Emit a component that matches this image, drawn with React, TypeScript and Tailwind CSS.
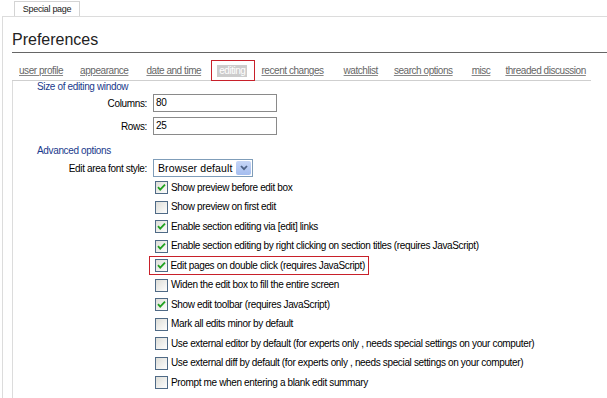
import React from 'react';

const tabs = [
  { label: 'user profile', ml: 'ml-[7px]' },
  { label: 'appearance', ml: 'ml-[17px]' },
  { label: 'date and time', ml: 'ml-[18px]' },
  { label: 'editing', ml: 'ml-[16px]', active: true },
  { label: 'recent changes', ml: 'ml-[14px]' },
  { label: 'watchlist', ml: 'ml-[20px]' },
  { label: 'search options', ml: 'ml-[16px]' },
  { label: 'misc', ml: 'ml-[19px]' },
  { label: 'threaded discussion', ml: 'ml-[15px]' },
];

const options: { label: string; checked: boolean; marked?: boolean }[] = [
  { label: 'Show preview before edit box', checked: true },
  { label: 'Show preview on first edit', checked: false },
  { label: 'Enable section editing via [edit] links', checked: true },
  { label: 'Enable section editing by right clicking on section titles (requires JavaScript)', checked: true },
  { label: 'Edit pages on double click (requires JavaScript)', checked: true, marked: true },
  { label: 'Widen the edit box to fill the entire screen', checked: false },
  { label: 'Show edit toolbar (requires JavaScript)', checked: true },
  { label: 'Mark all edits minor by default', checked: false },
  { label: 'Use external editor by default (for experts only , needs special settings on your computer)', checked: false },
  { label: 'Use external diff by default (for experts only , needs special settings on your computer)', checked: false },
  { label: 'Prompt me when entering a blank edit summary', checked: false },
];

function CheckBox({ checked }: { checked: boolean }) {
  return (
    <svg width="13" height="13" viewBox="0 0 13 13" className="shrink-0">
      <defs>
        <linearGradient id="cbg" x1="0" y1="0" x2="1" y2="1">
          <stop offset="0" stopColor="#dcdcd6" />
          <stop offset="1" stopColor="#ffffff" />
        </linearGradient>
      </defs>
      <rect x="0.5" y="0.5" width="12" height="12" fill="url(#cbg)" stroke="#4f6a86" />
      {checked && (
        <path d="M3 6.2 L5.2 8.6 L10 3.6" fill="none" stroke="#21a121" strokeWidth="1.8" />
      )}
    </svg>
  );
}

export default function App() {
  return (
    <div className="w-[607px] h-[398px] overflow-hidden bg-white text-black font-['Liberation_Sans',Arial,sans-serif]">
      {/* top tab */}
      <div className="h-[16px] flex items-end pl-[14px]">
        <div className="w-[66px] h-[15px] border border-b-0 border-[#d4d4d4] bg-white text-[9px] leading-[14px] text-center text-[#222] tracking-[-0.3px]">
          Special page
        </div>
      </div>

      <div className="ml-[2px] border-l border-t border-[#dcdcdc] h-[382px]">
        <div className="pl-[9px]">
          <h1 className="mt-[12px] text-[16px] leading-[22px] font-normal text-[#222] border-b border-[#666] pb-[1px]">
            Preferences
          </h1>

          {/* preference tabs */}
          <div className="mt-[13px] flex items-end h-[15px] border-b border-[#cfcfcf] w-[579px] whitespace-nowrap tracking-[-0.45px] text-[10px] leading-[12px]">
            {tabs.map(t => (
              <div key={t.label} className={`${t.ml} relative flex mb-[3px]`}>
                {t.active ? (
                  <>
                    <div className="absolute -left-[6px] -top-[5px] w-[44px] h-[21px] border-[1.5px] border-[#c8202a]" />
                    <span className="bg-[#cccccc] text-white px-[2px]">editing</span>
                  </>
                ) : (
                  <span className="text-[#666] underline underline-offset-[1px] decoration-[#888]">{t.label}</span>
                )}
              </div>
            ))}
          </div>

          {/* panel */}
          <div className="border-l border-[#dcdcdc] h-[330px] text-[10px] tracking-[-0.35px]">
            <div className="pl-[24px] text-[#1a3a8c] leading-[10px] pt-[1px]">Size of editing window</div>

            <div className="grid grid-cols-[134px_auto] gap-x-[6px] items-center mt-[2px]">
              <div className="text-right">Columns:</div>
              <div className="w-[124px] h-[18px] border border-[#8a8a8a] bg-white px-[2px] leading-[16px] text-[10px]">80</div>
              <div className="text-right mt-[5px]">Rows:</div>
              <div className="w-[124px] h-[18px] border border-[#8a8a8a] bg-white px-[2px] leading-[16px] text-[10px] mt-[5px]">25</div>
            </div>

            <div className="pl-[24px] mt-[9px] text-[#1a3a8c] leading-[14px]">Advanced options</div>

            <div className="grid grid-cols-[134px_auto] gap-x-[6px] items-center mt-[1px]">
              <div className="text-right">Edit area font style:</div>
              <div className="w-[100px] h-[18px] border border-[#7f9db9] bg-white flex items-center justify-between pl-[4px] pr-[1px] whitespace-nowrap">
                <span className="text-[10.5px] tracking-[0.1px] leading-[14px]">Browser default</span>
                <span className="w-[15px] h-[14px] rounded-[2px] bg-gradient-to-b from-[#c7d6f6] to-[#a4bdef] flex items-center justify-center">
                  <svg width="8" height="6" viewBox="0 0 8 6">
                    <path d="M1 1 L4 4.2 L7 1" fill="none" stroke="#4d6185" strokeWidth="1.8" />
                  </svg>
                </span>
              </div>
            </div>

            <div className="ml-[139px] mt-[1px] flex flex-col">
              {options.map(o => (
                <div key={o.label} className="h-[19.5px] flex items-center">
                  <div
                    className={`flex items-center gap-[3px] h-[19px] pl-[3px] pr-[3px] ${
                      o.marked ? 'border-[1.5px] border-[#c8202a] -ml-[3px] pl-[4.5px]' : ''
                    }`}
                  >
                    <CheckBox checked={o.checked} />
                    <span className="leading-[12px] whitespace-nowrap">{o.label}</span>
                  </div>
                </div>
              ))}
            </div>
          </div>
        </div>
      </div>
    </div>
  );
}
